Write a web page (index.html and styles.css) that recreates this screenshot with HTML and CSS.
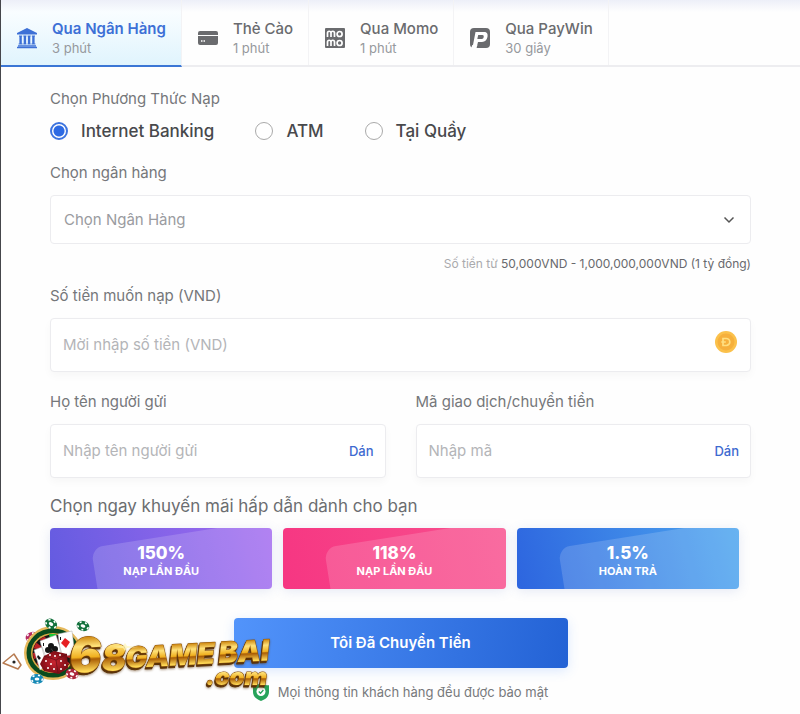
FILE: index.html
```html
<!DOCTYPE html>
<html lang="vi">
<head>
<meta charset="utf-8">
<meta name="viewport" content="width=device-width, initial-scale=1">
<title>Nạp tiền</title>
<link rel="stylesheet" href="styles.css">
</head>
<body>
<nav class="tabs">
  <a class="tab tab-active" href="#bank">
    <svg class="tab-icon" viewBox="0 0 22 22" fill="currentColor"><path d="M11 1 21 6v1.500H1V6zM3 8.500h3.200v1H5.800v7h.8v1H2.600v-1h.8v-7H3zM7.300 8.500h3.200v1h-.4v7h.4v1H7.300v-1h.4v-7h-.4zM11.500 8.500h3.200v1h-.4v7h.4v1h-3.200v-1h.4v-7h-.4zM15.800 8.500H19v1h-.4v7h.8v1h-4v-1h.8v-7h-.4zM2 18.200h18v1.200H2zM1 19.800h20v1.400H1z"/></svg>
    <span class="tab-text"><strong>Qua Ngân Hàng</strong><small>3 phút</small></span>
  </a>
  <a class="tab" href="#card">
    <svg class="tab-icon" viewBox="0 0 22 22" fill="currentColor"><path d="M3 4h16a2 2 0 0 1 2 2v2H1V6a2 2 0 0 1 2-2zM1 9h20v7a2 2 0 0 1-2 2H3a2 2 0 0 1-2-2z"/><path d="M4 14h1.500M6.500 14h1.500" stroke="#fff" stroke-width="1.500"/></svg>
    <span class="tab-text"><strong>Thẻ Cào</strong><small>1 phút</small></span>
  </a>
  <a class="tab" href="#momo">
    <svg class="tab-icon" viewBox="0 0 22 22"><rect x="1" y="1" width="20" height="20" rx="1" fill="currentColor"/><g fill="none" stroke="#fff" stroke-width="1.700"><path d="M3.500 10V6a1.600 1.600 0 0 1 3.500 0v4M7 6a1.600 1.600 0 0 1 3.500 0v4M3.500 19v-4a1.600 1.600 0 0 1 3.500 0v4M7 15a1.600 1.600 0 0 1 3.500 0v4"/><circle cx="15.600" cy="7" r="2.500"/><circle cx="15.600" cy="16" r="2.500"/></g></svg>
    <span class="tab-text"><strong>Qua Momo</strong><small>1 phút</small></span>
  </a>
  <a class="tab" href="#paywin">
    <svg class="tab-icon" viewBox="0 0 22 22"><path d="M5 1h12a4 4 0 0 1 4 4v12a4 4 0 0 1-4 4H5a4 4 0 0 1-4-4V5a4 4 0 0 1 4-4z" fill="currentColor"/><path d="M6.500 5H15c3 0 4 1.800 3.500 4.800S16.200 15 13 15H9l-1 4H3.800zM9.200 8 8.300 12h4.500c1.100 0 1.700-.7 1.900-2s-.2-2-1.300-2z" fill="#fff" fill-rule="evenodd"/><path d="M2 21.500 3.300 18h5L7.500 21.500z" fill="#fff"/></svg>
    <span class="tab-text"><strong>Qua PayWin</strong><small>30 giây</small></span>
  </a>
</nav>

<form class="deposit">
  <fieldset class="methods">
    <legend class="label">Chọn Phương Thức Nạp</legend>
    <div class="radios">
      <label class="radio"><input type="radio" name="method" checked>Internet Banking</label>
      <label class="radio"><input type="radio" name="method">ATM</label>
      <label class="radio"><input type="radio" name="method">Tại Quầy</label>
    </div>
  </fieldset>

  <div class="field">
    <label class="label" for="bank">Chọn ngân hàng</label>
    <div class="select-box">
      <select id="bank"><option>Chọn Ngân Hàng</option></select>
      <svg class="chevron" viewBox="0 0 12 12" fill="none" stroke="#555" stroke-width="1.500"><path d="m1.500 3.500 4.500 4.500 4.500-4.500"/></svg>
    </div>
    <p class="hint">Số tiền từ <span>50,000VND - 1,000,000,000VND (1 tỷ đồng)</span></p>
  </div>

  <div class="field field-amount">
    <label class="label" for="amount">Số tiền muốn nạp (VND)</label>
    <div class="input-box">
      <input id="amount" type="text" placeholder="Mời nhập số tiền (VND)">
      <svg class="coin" viewBox="0 0 22 22"><circle cx="11" cy="11" r="11" fill="#fbc14b"/><circle cx="11" cy="11" r="8.500" fill="#f6b03c"/><path d="M8 7.500h3.300a3.500 3.500 0 0 1 0 7H8zM6.300 11h4.500" fill="none" stroke="#ffdf80" stroke-width="1.700"/></svg>
    </div>
  </div>

  <div class="columns">
    <div class="field">
      <label class="label" for="sender">Họ tên người gửi</label>
      <div class="input-box"><input id="sender" type="text" placeholder="Nhập tên người gửi"><button class="paste" type="button">Dán</button></div>
    </div>
    <div class="field">
      <label class="label" for="code">Mã giao dịch/chuyển tiền</label>
      <div class="input-box"><input id="code" type="text" placeholder="Nhập mã"><button class="paste" type="button">Dán</button></div>
    </div>
  </div>

  <h2 class="promo-title">Chọn ngay khuyến mãi hấp dẫn dành cho bạn</h2>
  <div class="promos">
    <button class="promo promo-violet" type="button"><strong>150%</strong><span>NẠP LẦN ĐẦU</span></button>
    <button class="promo promo-pink" type="button"><strong>118%</strong><span>NẠP LẦN ĐẦU</span></button>
    <button class="promo promo-blue" type="button"><strong>1.5%</strong><span>HOÀN TRẢ</span></button>
  </div>

  <button class="submit" type="submit">Tôi Đã Chuyển Tiền</button>
  <p class="secure">
    <svg class="shield" viewBox="0 0 16 18"><path d="M8 0c2.500 1.600 5 2.300 8 2.300V9c0 4.500-3.500 7.500-8 9-4.500-1.500-8-4.500-8-9V2.300C3 2.300 5.500 1.600 8 0z" fill="#27a35a"/><circle cx="8" cy="8.500" r="4.500" fill="#fff"/><path d="m5.800 8.500 1.700 1.700 2.900-3.200" fill="none" stroke="#27a35a" stroke-width="1.300"/></svg>
    Mọi thông tin khách hàng đều được bảo mật
  </p>

  <svg class="brand" viewBox="0 0 280 90" role="img" aria-label="68GAMEBAI.com">
    <defs>
      <linearGradient id="gold" x1="0" y1="0" x2="0" y2="1">
        <stop offset="0.200" stop-color="#d08a12"/><stop offset="0.360" stop-color="#ffe27a"/><stop offset="0.540" stop-color="#f0b020"/><stop offset="0.580" stop-color="#a95d05"/><stop offset="0.780" stop-color="#ffd956"/>
      </linearGradient>
      <radialGradient id="dice"><stop offset="0" stop-color="#c92531"/><stop offset="1" stop-color="#7d0d15"/></radialGradient>
      <g id="chip"><ellipse rx="6.500" ry="5" fill="currentColor"/><ellipse rx="5.300" ry="3.800" fill="none" stroke="#fff" stroke-width="1.600" stroke-dasharray="2 3.500"/><ellipse rx="2.400" ry="1.600" fill="#fff"/></g>
    </defs>
    <use href="#chip" color="#b52961" transform="translate(32 25) rotate(-15)"/>
    <ellipse cx="53" cy="41" rx="29" ry="27" fill="#e6b95c"/>
    <ellipse cx="53" cy="41" rx="26.500" ry="24.500" fill="#0a4b1d"/>
    <ellipse cx="53" cy="41" rx="22" ry="20" fill="#d9aa45"/>
    <ellipse cx="53" cy="41" rx="20.500" ry="18.500" fill="#151515"/>
    <ellipse cx="53" cy="41" rx="17" ry="15" fill="none" stroke="#bd2025" stroke-width="6" stroke-dasharray="5 4"/>
    <path d="M49 22h7l-1 5h-5z" fill="#18c936"/>
    <g stroke="#aaa" stroke-width=".5" fill="#fff"><path d="m34 38 8-3 7 17-9 6zM40 29l16-6 8 25-17 6zM58 22l14-3 3 23-14 3z"/></g>
    <g fill="#151515"><circle cx="51" cy="34" r="3"/><circle cx="48" cy="38" r="3"/><circle cx="55" cy="37" r="3"/><path d="m51 36 4 7h-6zM38 43l3 3-2 2-2-3zM43 31h1v3h-1zM60 25h1v3h-1z"/></g>
    <path d="m65 26 5 4-4 6-5-5z" fill="#e62024"/>
    <path d="m44 44 10-5 13 3 1 14-9 6-15-3-4-7z" fill="url(#dice)"/>
    <path d="m44 44 12 4 11-6M56 48l2 13" fill="none" stroke="#641018" stroke-width=".7"/>
    <g fill="#fff"><circle cx="50" cy="43" r="1"/><circle cx="55" cy="44" r="1"/><circle cx="60" cy="43" r="1"/><circle cx="46" cy="49" r="1"/><circle cx="51" cy="52" r="1"/><circle cx="48" cy="56" r="1"/><circle cx="54" cy="57" r="1"/><circle cx="61" cy="49" r="1"/><circle cx="65" cy="53" r="1"/><circle cx="61" cy="57" r="1"/></g>
    <use href="#chip" color="#12713c" transform="translate(51 12) rotate(30)"/>
    <use href="#chip" color="#12713c" transform="translate(83 14) rotate(18)"/>
    <use href="#chip" color="#1689b5" transform="translate(37 67)"/>
    <path d="m3 51 11-9 7 11-3 4z" fill="#fff" stroke="#b77b51" stroke-width="1.500" stroke-linejoin="round"/><circle cx="14" cy="50" r="1.600" fill="#222"/>
    <g class="brand-face" fill="url(#gold)">
      <text x="70" y="61" transform="rotate(-3 70 61)"><tspan class="brand-six">6</tspan><tspan class="brand-eight">8</tspan></text>
      <text class="brand-name" x="126" y="56" transform="rotate(-3 126 56)">GAME</text>
      <text class="brand-name" x="219" y="51" transform="rotate(-3 219 51)">BAI</text>
      <text class="brand-com" x="206" y="73">.com</text>
    </g>
    <use href="#chip" color="#ad263b" transform="translate(72 62) rotate(18)"/>
    <path d="m112 35 11-1 2-3 2 3 12 1-12 1-2 3-2-3z" fill="#fff6b6" opacity=".7"/>
  </svg>
</form>
</body>
</html>
```
FILE: styles.css
```css
* { box-sizing: border-box; }
body {
  margin: 0;
  min-height: 100vh;
  border-left: 1px solid #45464b;
  background: #fefefe;
  color: #66686c;
  font-family: Inter, "Noto Sans", sans-serif;
  font-size: 14px;
  line-height: 20px;
}
button, input, select { font: inherit; color: inherit; }
p, h2 { margin: 0; }

.tabs {
  display: flex;
  height: 67px;
  border-bottom: 2px solid #ededf0;
  background: linear-gradient(#edeff8, #fefefe 12px);
}
.tab {
  display: flex;
  align-items: center;
  gap: 14px;
  height: 65px;
  padding: 10px 15px 0;
  border-right: 1px solid #f3f3f5;
  color: #6a6b6e;
  text-decoration: none;
}
.tab-active {
  height: 67px;
  border-bottom: 2px solid #3b76d5;
  background: linear-gradient(#edeff8, #f9fdff 12px, #e0f4fd);
  color: #3d70d6;
}
.tab-icon { width: 22px; height: 22px; flex: none; }
.tab-text { display: flex; flex-direction: column; }
.tab strong { font-size: 15px; font-weight: 500; line-height: 20px; }
.tab-active strong { font-weight: 600; }
.tab small { color: #96999d; font-size: 13px; line-height: 18px; }

.deposit {
  position: relative;
  display: flex;
  flex-direction: column;
  padding: 22px 49px 12px;
}
.methods { min-width: 0; margin: 0; padding: 0; border: 0; }
.label { display: block; padding: 0; font-size: 15px; line-height: 20px; color: #75777a; }
.radios { display: flex; gap: 41px; margin-top: 12px; }
.radio { display: flex; align-items: center; gap: 13px; color: #48494c; font-size: 17px; font-weight: 500; }
.radio input {
  appearance: none;
  width: 18px;
  height: 18px;
  margin: 0;
  border: 1px solid #aaa;
  border-radius: 50%;
  background: #fff;
}
.radio input:checked { border: 2px solid #3d74df; background: radial-gradient(#2d6ae3 5px, #fff 6px); }
.field { margin-top: 22px; }
.field-amount { margin-top: 12px; }
.select-box, .input-box {
  position: relative;
  display: flex;
  align-items: center;
  margin-top: 12px;
  border: 1px solid #ececef;
  border-radius: 4px;
  background: #fff;
}
.select-box { height: 49px; }
.input-box { height: 54px; padding: 0 11px 0 12px; box-shadow: 0 4px 8px #00000008; }
select {
  appearance: none;
  width: 100%;
  height: 100%;
  padding: 0 13px;
  border: 0;
  background: transparent;
  color: #9a9ba0;
  font-size: 15px;
}
.chevron { position: absolute; right: 15px; width: 12px; height: 12px; pointer-events: none; }
.hint { margin-top: 10px; color: #aaaaad; font-size: 12px; text-align: right; }
.hint span { color: #68696d; }
.input-box input { flex: 1; min-width: 0; padding: 0; border: 0; outline: 0; background: transparent; font-size: 15px; }
.input-box input::placeholder { color: #b4b5b8; opacity: 1; }
.coin { width: 22px; height: 22px; margin: 0 2px 6px 0; }
.paste { padding: 0; border: 0; background: none; color: #3d6ad0; font-size: 13px; font-weight: 500; }
.columns { display: grid; grid-template-columns: 1fr 1fr; gap: 30px; }
.columns .field { margin-top: 20px; }

.promo-title { margin-top: 18px; font-size: 17px; font-weight: 400; line-height: 20px; color: #6b6d70; }
.promos { display: grid; grid-template-columns: repeat(3, 1fr); gap: 11px; margin: 12px 12px 0 0; }
.promo {
  position: relative;
  display: flex;
  flex-direction: column;
  align-items: center;
  justify-content: center;
  height: 61px;
  padding: 5px 0 0;
  border: 0;
  border-radius: 4px;
  overflow: clip;
  color: #fff;
  box-shadow: 0 2px 12px #5369bd26;
}
.promo::before {
  content: "";
  position: absolute;
  top: 20px;
  left: 41px;
  width: 260px;
  height: 120px;
  border-radius: 12px;
  background: #ffffff29;
  transform: rotate(-9deg);
  transform-origin: 0 0;
}
.promo strong, .promo span { position: relative; }
.promo strong { font-size: 17px; font-weight: 800; line-height: 19px; }
.promo span { font-size: 11px; font-weight: 700; line-height: 16px; }
.promo-violet { background: linear-gradient(75deg, #635be0, #a36bf0); }
.promo-pink { background: linear-gradient(75deg, #f63682, #f8508e); }
.promo-blue { background: linear-gradient(75deg, #2d65df, #4ca5ef); }

.submit {
  align-self: center;
  width: 334px;
  max-width: 100%;
  height: 50px;
  margin-top: 29px;
  border: 0;
  border-radius: 4px;
  background: linear-gradient(100deg, #5294fb, #2362d5);
  box-shadow: 0 3px 12px #3e87ff2e;
  color: #fff;
  font-size: 15px;
  font-weight: 600;
}
.secure { display: flex; align-items: center; align-self: center; gap: 9px; margin-top: 14px; color: #77797c; font-size: 13px; }
.shield { width: 16px; height: 18px; }

.brand { position: absolute; bottom: 12px; left: -1px; width: 280px; height: 90px; pointer-events: none; overflow: visible; }
.brand-face {
  font-family: Inter, sans-serif;
  font-style: italic;
  font-weight: 900;
  stroke: #8a4f08;
  stroke-width: 1px;
  paint-order: stroke;
  stroke-linejoin: round;
  filter: drop-shadow(-1px 2px 0 #5a3208) drop-shadow(0 1px 1px #5a320880);
}
.brand-six { font-size: 48px; }
.brand-eight { font-size: 36px; }
.brand-name { font-size: 29px; }
.brand-com { font-size: 24px; }
```
